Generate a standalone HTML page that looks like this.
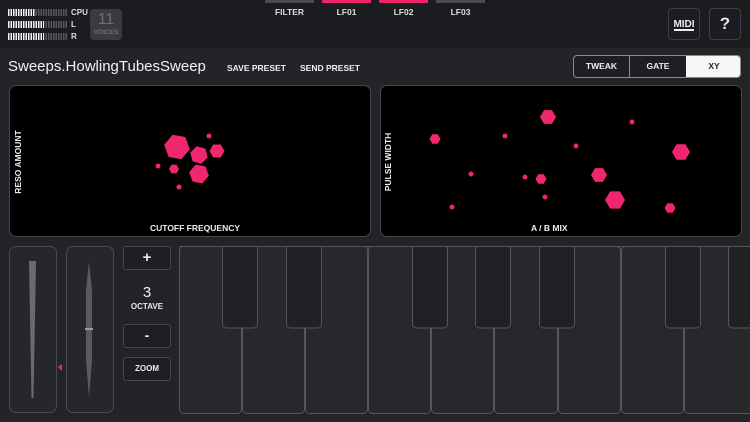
<!DOCTYPE html>
<html><head><meta charset="utf-8"><style>
*{margin:0;padding:0;box-sizing:border-box}
body{width:750px;height:422px;overflow:hidden;background:#232428;font-family:"Liberation Sans",sans-serif;color:#e6e6e6;position:relative}
.a{position:absolute}
.top{left:0;top:0;width:750px;height:48px;background:#1b1c20}
.meter{left:8px;width:60px;height:7px;background:repeating-linear-gradient(90deg,#55575c 0 1.6px,transparent 1.6px 2.5px)}
.meter i{position:absolute;left:0;top:0;height:7px;background:repeating-linear-gradient(90deg,#f2f2f2 0 1.6px,transparent 1.6px 2.5px)}
.ml{font-size:8px;font-weight:bold;color:#ddd}
.tab{top:0;width:49px;height:3px}
.tl{top:7px;width:49px;text-align:center;font-size:8.5px;font-weight:bold;color:#ddd}
.btn{border:1px solid #3e3f44;border-radius:4px}
.pad{background:#000;border:1px solid #46474c;border-radius:7px}
.lbl{font-size:8.5px;font-weight:bold;color:#eee}
.sl{border:1px solid #4a4b50;border-radius:7px;background:#26272b}
.sb{border:1px solid #45464b;border-radius:3px;background:#1e1f23;font-size:8px;font-weight:bold;text-align:center;color:#eee}
</style></head><body>
<div class="a top"></div>
<div class="a meter" style="top:9px"><i style="width:27px"></i></div>
<div class="a meter" style="top:21px"><i style="width:36px"></i></div>
<div class="a meter" style="top:33px"><i style="width:36px"></i></div>
<div class="a ml" style="left:71px;top:8px">CPU</div>
<div class="a ml" style="left:71px;top:20px">L</div>
<div class="a ml" style="left:71px;top:32px">R</div>
<div class="a" style="left:90px;top:9px;width:32px;height:31px;background:#3a3b40;border-radius:4px;text-align:center;color:#6e7075">
<div style="font-size:16px;line-height:18px;margin-top:2px">11</div><div style="font-size:6.5px;font-weight:bold">VOICES</div></div>
<div class="a tab" style="left:265px;background:#4a4b50"></div>
<div class="a tab" style="left:322px;background:#ee2467"></div>
<div class="a tab" style="left:379px;background:#ee2467"></div>
<div class="a tab" style="left:436px;background:#4a4b50"></div>
<div class="a tl" style="left:265px">FILTER</div>
<div class="a tl" style="left:322px">LF01</div>
<div class="a tl" style="left:379px">LF02</div>
<div class="a tl" style="left:436px">LF03</div>
<div class="a btn" style="left:668px;top:8px;width:32px;height:32px">
<svg width="30" height="30" viewBox="0 0 30 30"><text x="15" y="18" font-family="Liberation Sans" font-weight="bold" font-size="10" fill="#eee" text-anchor="middle">MIDI</text><rect x="5" y="20" width="20" height="2" fill="#eee"/></svg></div>
<div class="a btn" style="left:709px;top:8px;width:32px;height:32px;text-align:center;font-size:17px;font-weight:bold;line-height:30px">?</div>
<div class="a" style="left:8px;top:58px;font-size:15px;color:#f2f2f2">Sweeps.HowlingTubesSweep</div>
<div class="a lbl" style="left:227px;top:63px">SAVE PRESET</div>
<div class="a lbl" style="left:300px;top:63px">SEND PRESET</div>
<div class="a" style="left:573px;top:55px;width:168px;height:23px;border:1px solid #8a8b90;border-radius:4px;overflow:hidden;background:#1e1f23">
<div class="a lbl" style="left:0;top:0;width:56px;height:21px;line-height:21px;text-align:center;border-right:1px solid #8a8b90">TWEAK</div>
<div class="a lbl" style="left:56px;top:0;width:56px;height:21px;line-height:21px;text-align:center">GATE</div>
<div class="a lbl" style="left:112px;top:0;width:56px;height:21px;line-height:21px;text-align:center;background:#f7f7f7;color:#222">XY</div></div>
<div class="a pad" style="left:9px;top:85px;width:362px;height:152px"></div>
<div class="a pad" style="left:380px;top:85px;width:362px;height:152px"></div>
<div class="a lbl" style="left:150px;top:223px">CUTOFF FREQUENCY</div>
<div class="a lbl" style="left:531px;top:223px">A / B MIX</div>
<div class="a lbl" style="left:-17px;top:157px;transform:rotate(-90deg);width:70px;text-align:center">RESO AMOUNT</div>
<div class="a lbl" style="left:353px;top:157px;transform:rotate(-90deg);width:70px;text-align:center">PULSE WIDTH</div>
<svg class="a" style="left:0;top:0" width="750" height="422" fill="#f0266f">
<defs><polygon id="h" points="1,0 .5,.866 -.5,.866 -1,0 -.5,-.866 .5,-.866"/></defs>
<g transform="translate(177,147) scale(13) rotate(10)"><use href="#h"/></g>
<g transform="translate(199,155) scale(9) rotate(15)"><use href="#h"/></g>
<g transform="translate(217,151) scale(7.5)"><use href="#h"/></g>
<g transform="translate(199,174) scale(10) rotate(10)"><use href="#h"/></g>
<g transform="translate(174,169) scale(5)"><use href="#h"/></g>
<circle cx="209" cy="136" r="2.5"/><circle cx="158" cy="166" r="2.5"/><circle cx="179" cy="187" r="2.5"/>
<g transform="translate(548,117) scale(8)"><use href="#h"/></g>
<g transform="translate(435,139) scale(5.5)"><use href="#h"/></g>
<g transform="translate(681,152) scale(9)"><use href="#h"/></g>
<g transform="translate(541,179) scale(5.5)"><use href="#h"/></g>
<g transform="translate(599,175) scale(8)"><use href="#h"/></g>
<g transform="translate(615,200) scale(10)"><use href="#h"/></g>
<g transform="translate(670,208) scale(5.5)"><use href="#h"/></g>
<circle cx="505" cy="136" r="2.5"/><circle cx="576" cy="146" r="2.5"/><circle cx="632" cy="122" r="2.5"/><circle cx="471" cy="174" r="2.5"/><circle cx="525" cy="177" r="2.5"/><circle cx="545" cy="197" r="2.5"/><circle cx="452" cy="207" r="2.5"/>
</svg>
<div class="a sl" style="left:9px;top:246px;width:48px;height:167px"></div>
<div class="a sl" style="left:66px;top:246px;width:48px;height:167px"></div>
<svg class="a" style="left:0;top:240px" width="120" height="182">
<polygon points="29,21 36,21 33.5,158 31.5,158" fill="#6a6b70"/>
<polygon points="89,22 92,50 92,88 86,88 86,50" fill="#5a5b60"/>
<polygon points="86,90 92,90 92,120 89,158 86,120" fill="#5a5b60"/>
<rect x="85" y="88" width="8" height="2" fill="#9a9ba0"/>
<polygon points="58,127 62,124 62,131" fill="#f0266f"/>
</svg>
<div class="a sb" style="left:123px;top:246px;width:48px;height:24px;font-size:15px;line-height:22px">+</div>
<div class="a" style="left:123px;top:284px;width:48px;text-align:center;font-size:15px;color:#f2f2f2">3</div>
<div class="a" style="left:123px;top:302px;width:48px;text-align:center;font-size:8px;font-weight:bold">OCTAVE</div>
<div class="a sb" style="left:123px;top:324px;width:48px;height:24px;font-size:14px;line-height:21px">-</div>
<div class="a sb" style="left:123px;top:357px;width:48px;height:24px;line-height:22px">ZOOM</div>
<svg class="a" style="left:0;top:0" width="750" height="422" fill="#27282c" stroke="#55565b" stroke-width="1">
<rect x="179.5" y="246.5" width="62" height="167" rx="4"/>
<rect x="242.5" y="246.5" width="62" height="167" rx="4"/>
<rect x="305.5" y="246.5" width="62" height="167" rx="4"/>
<rect x="368.5" y="246.5" width="62" height="167" rx="4"/>
<rect x="431.5" y="246.5" width="62" height="167" rx="4"/>
<rect x="494.5" y="246.5" width="63" height="167" rx="4"/>
<rect x="558.5" y="246.5" width="62" height="167" rx="4"/>
<rect x="621.5" y="246.5" width="62" height="167" rx="4"/>
<rect x="684.5" y="246.5" width="70" height="167" rx="4"/>
<g fill="#202125">
<rect x="222.5" y="239" width="35" height="89" rx="4"/>
<rect x="286.5" y="239" width="35" height="89" rx="4"/>
<rect x="412.5" y="239" width="35" height="89" rx="4"/>
<rect x="475.5" y="239" width="35" height="89" rx="4"/>
<rect x="539.5" y="239" width="35" height="89" rx="4"/>
<rect x="665.5" y="239" width="35" height="89" rx="4"/>
<rect x="728.5" y="239" width="35" height="89" rx="4"/>
</g>
<rect x="175" y="238.5" width="575" height="7.5" fill="#232428" stroke="none"/>
<line x1="179" y1="246.5" x2="750" y2="246.5"/>
</svg>
</body></html>
